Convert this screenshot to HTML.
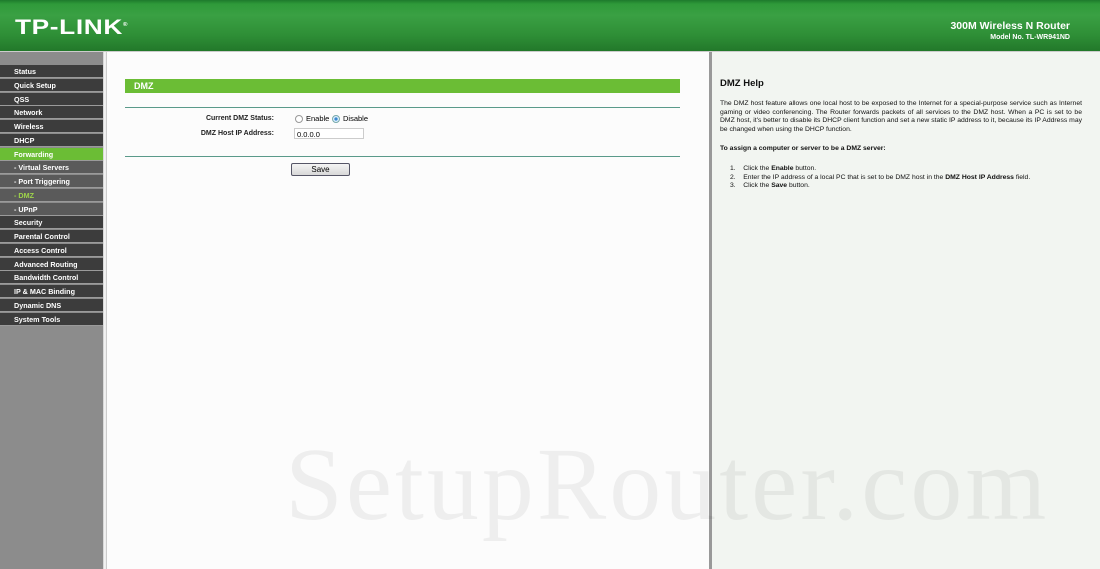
<!DOCTYPE html><html><head><style>
body{margin:0;width:1100px;height:569px;overflow:hidden;font-family:"Liberation Sans",Arial,sans-serif;position:relative;background:#fff}
#hd{position:absolute;left:0;top:0;width:1100px;height:51px;background:linear-gradient(#1d7a2c 0,#2f9a3a 8%,#3aa043 30%,#2e8e36 70%,#22782a 100%);border-bottom:1px solid #ccc}
#logo{position:absolute;left:15px;top:16px;color:#fff;font-weight:bold;font-size:21px;letter-spacing:0.5px;transform:scaleX(1.25);transform-origin:left}
#t1{position:absolute;right:30px;top:20px;color:#fff;font-weight:bold;font-size:10.5px}
#t2{position:absolute;right:30px;top:34px;color:#fff;font-weight:bold;font-size:7px}
#sb{position:absolute;left:0;top:52px;width:103px;height:517px;background:#8c8c8c}
#sbl{position:absolute;left:103px;top:52px;width:4px;height:517px;background:linear-gradient(90deg,#ccc,#fff,#bbb)}
.m{position:absolute;left:0;width:103px;height:12.7px;border-bottom:1px solid #9a9a9a;background:#3c3c3c;color:#fff;font-weight:bold;font-size:7.2px;line-height:13px;padding-left:14px;box-sizing:border-box}
.s{background:#5a5a5a}.g{background:#6bbd35}.d{color:#9ed44a}
#main{position:absolute;left:107px;top:52px;width:602px;height:517px;background:#fcfcfc}
#hb{position:absolute;left:709px;top:52px;width:3px;height:517px;background:#999}
#help{position:absolute;left:712px;top:52px;width:388px;height:517px;background:#f2f5f1;font-size:6.8px;color:#111}
.lbl{position:absolute;font-weight:bold;font-size:7px;color:#222}
</style></head><body>
<div id="hd"><div id="logo">TP-LINK<sup style="font-size:5px">®</sup></div><div id="t1">300M Wireless N Router</div><div id="t2">Model No. TL-WR941ND</div></div>
<div id="sb"></div><div id="sbl"></div>
<div class="m" style="top:65px">Status</div>
<div class="m" style="top:79px">Quick Setup</div>
<div class="m" style="top:93px">QSS</div>
<div class="m" style="top:106px">Network</div>
<div class="m" style="top:120px">Wireless</div>
<div class="m" style="top:134px">DHCP</div>
<div class="m g" style="top:148px">Forwarding</div>
<div class="m s" style="top:161px">- Virtual Servers</div>
<div class="m s" style="top:175px">- Port Triggering</div>
<div class="m s d" style="top:189px">- DMZ</div>
<div class="m s" style="top:203px">- UPnP</div>
<div class="m" style="top:216px">Security</div>
<div class="m" style="top:230px">Parental Control</div>
<div class="m" style="top:244px">Access Control</div>
<div class="m" style="top:258px">Advanced Routing</div>
<div class="m" style="top:271px">Bandwidth Control</div>
<div class="m" style="top:285px">IP &amp; MAC Binding</div>
<div class="m" style="top:299px">Dynamic DNS</div>
<div class="m" style="top:313px">System Tools</div>
<div id="main">
<div style="position:absolute;left:18px;top:27px;width:555px;height:14px;background:#6bbd35;color:#fff;font-weight:bold;font-size:9px;line-height:14px;padding-left:9px;box-sizing:border-box">DMZ</div>
<div style="position:absolute;left:18px;top:55px;width:555px;height:1px;background:#5a9a8a"></div>
<div class="lbl" style="right:435px;top:63px">Current DMZ Status:</div>
<div class="lbl" style="right:435px;top:78px">DMZ Host IP Address:</div>
<div style="position:absolute;left:188px;top:63px;width:6px;height:6px;border:1px solid #999;border-radius:50%;background:#fff"></div>
<div style="position:absolute;left:199px;top:62px;font-size:7.5px">Enable</div>
<div style="position:absolute;left:225px;top:63px;width:6px;height:6px;border:1px solid #7aa;border-radius:50%;background:radial-gradient(#3a8ad0 35%,#dfefff 45%)"></div>
<div style="position:absolute;left:236px;top:62px;font-size:7.5px">Disable</div>
<div style="position:absolute;left:187px;top:76px;width:70px;height:11px;border:1px solid #ccc;background:#fff;font-size:7.5px;line-height:11px;padding-left:2px;box-sizing:border-box">0.0.0.0</div>
<div style="position:absolute;left:18px;top:104px;width:555px;height:1px;background:#5a9a8a"></div>
<div style="position:absolute;left:184px;top:111px;width:57px;height:11px;border:1px solid #556;border-radius:2px;background:linear-gradient(#f4f4f4,#d8d8d8);font-size:8px;text-align:center;line-height:11px">Save</div>
</div>
<div id="hb"></div>
<div id="help">
<div style="position:absolute;left:8px;top:26px;font-weight:bold;font-size:9.5px">DMZ Help</div>
<div style="position:absolute;left:8px;top:48px;width:362px;text-align:justify;line-height:8.6px">The DMZ host feature allows one local host to be exposed to the Internet for a special-purpose service such as Internet gaming or video conferencing. The Router forwards packets of all services to the DMZ host. When a PC is set to be DMZ host, it's better to disable its DHCP client function and set a new static IP address to it, because its IP Address may be changed when using the DHCP function.</div>
<div style="position:absolute;left:8px;top:93px;font-weight:bold">To assign a computer or server to be a DMZ server:</div>
<div style="position:absolute;left:18px;top:113px;line-height:8.6px">1.&nbsp;&nbsp;&nbsp;&nbsp;Click the <b>Enable</b> button.<br>2.&nbsp;&nbsp;&nbsp;&nbsp;Enter the IP address of a local PC that is set to be DMZ host in the <b>DMZ Host IP Address</b> field.<br>3.&nbsp;&nbsp;&nbsp;&nbsp;Click the <b>Save</b> button.</div>
</div>
<div style="position:absolute;left:285px;top:425px;font-family:'Liberation Serif',serif;font-size:104px;color:rgba(0,0,0,0.055);white-space:nowrap;letter-spacing:3px">SetupRouter.com</div>
</body></html>
